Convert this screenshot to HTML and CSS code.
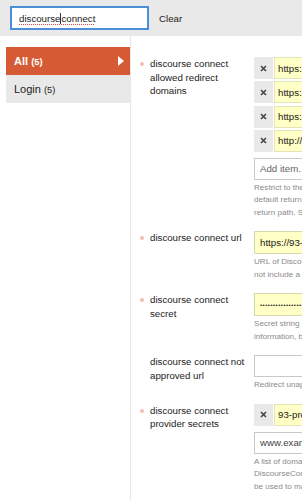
FILE: index.html
```html
<!DOCTYPE html>
<html>
<head>
<meta charset="utf-8">
<link rel="stylesheet" href="styles.css">
</head>
<body>
<div class="topbar">
  <div class="search"><span class="sq">discourse</span><span class="caret"></span><span class="sq">connect</span></div>
  <span class="clear">Clear</span>
</div>
<div class="main">
  <nav class="side">
    <div class="nav-item active"><span>All <span class="count">(5)</span></span><svg class="tri" width="6" height="10" viewBox="0 0 6 10"><polygon points="0,0 6,5 0,10" fill="#fff"/></svg></div>
    <div class="nav-item"><span>Login <span class="count">(5)</span></span></div>
  </nav>
  <div class="settings">
    <div class="row">
      <div class="label"><span class="dot"></span><span class="ltext">discourse connect allowed redirect domains</span></div>
      <div class="ctrl">
        <div class="list">
          <div class="chip"><span class="x"><svg width="7" height="7" viewBox="0 0 7 7"><path d="M1 1L6 6M6 1L1 6" stroke="#444" stroke-width="1.6"/></svg></span><span class="val">https://93-pretty-forum.example.com</span></div>
          <div class="chip"><span class="x"><svg width="7" height="7" viewBox="0 0 7 7"><path d="M1 1L6 6M6 1L1 6" stroke="#444" stroke-width="1.6"/></svg></span><span class="val">https://app.example.com</span></div>
          <div class="chip"><span class="x"><svg width="7" height="7" viewBox="0 0 7 7"><path d="M1 1L6 6M6 1L1 6" stroke="#444" stroke-width="1.6"/></svg></span><span class="val">https://www.example.com</span></div>
          <div class="chip"><span class="x"><svg width="7" height="7" viewBox="0 0 7 7"><path d="M1 1L6 6M6 1L1 6" stroke="#444" stroke-width="1.6"/></svg></span><span class="val">http://localhost:3000</span></div>
        </div>
        <div class="input plain"><span class="ph">Add item...</span></div>
        <div class="desc">
          <div>Restrict to the following domains for return_paths provided by DiscourseConnect (by</div>
          <div>default return path must be on current site). Use * to allow any domain for</div>
          <div>return path. Subdomain wildcards (*.foobar.com) are not allowed.</div>
        </div>
      </div>
    </div>
    <div class="row">
      <div class="label"><span class="dot"></span><span class="ltext">discourse connect url</span></div>
      <div class="ctrl">
        <div class="input yellow">https://93-pretty-forum.example.com/session/sso_provider</div>
        <div class="desc">
          <div>URL of DiscourseConnect endpoint (must include http:// or https://, and must</div>
          <div>not include a trailing slash)</div>
        </div>
      </div>
    </div>
    <div class="row">
      <div class="label"><span class="dot"></span><span class="ltext">discourse connect secret</span></div>
      <div class="ctrl">
        <div class="input yellow pw">••••••••••••••••••••••••••••••</div>
        <div class="desc">
          <div>Secret string used to cryptographically authenticate DiscourseConnect</div>
          <div>information, be sure it is 10 characters or longer</div>
        </div>
      </div>
    </div>
    <div class="row">
      <div class="label"><span class="nodot"></span><span class="ltext">discourse connect not approved url</span></div>
      <div class="ctrl">
        <div class="input plain"></div>
        <div class="desc">
          <div>Redirect unapproved DiscourseConnect accounts to this URL</div>
        </div>
      </div>
    </div>
    <div class="row">
      <div class="label"><span class="dot"></span><span class="ltext">discourse connect provider secrets</span></div>
      <div class="ctrl">
        <div class="list">
          <div class="chip"><span class="x"><svg width="7" height="7" viewBox="0 0 7 7"><path d="M1 1L6 6M6 1L1 6" stroke="#444" stroke-width="1.6"/></svg></span><span class="val">93-pretty-forum.example.com|secret</span></div>
        </div>
        <div class="input plain"><span class="dark">www.example.com|sso_secret</span></div>
        <div class="desc">
          <div>A list of domain-secret pairs that are using DiscourseConnect provider. Make sure</div>
          <div>DiscourseConnect secret is 10 characters or longer. Wildcard symbol * can</div>
          <div>be used to match any domain or only a part of it (e.g. *.example.com).</div>
        </div>
      </div>
    </div>
  </div>
</div>
</body>
</html>
```

FILE: styles.css
```css
* { box-sizing: border-box; }
html, body { margin: 0; padding: 0; overflow: hidden; background: #fff; }
body {
  font-family: "Liberation Sans", Arial, sans-serif;
  color: #222;
  width: 302px;
  height: 500px;
}
.topbar {
  height: 36px;
  background: #e9e9e9;
  display: flex;
  align-items: center;
  padding-left: 10px;
  width: 302px;
}
.search {
  width: 139px;
  height: 24px;
  border: 2px solid #4a8fd8;
  background: #fff;
  display: flex;
  align-items: center;
  padding-left: 7px;
  font-size: 9.7px;
  color: #222;
  flex-shrink: 0;
}
.sq {
  text-decoration: underline dotted #e0463a 1px;
  text-underline-offset: 2px;
}
.caret { width: 1px; height: 11px; background: #333; }
.clear { margin-left: 10px; font-size: 9.7px; color: #222; }
.main { display: flex; min-height: 464px; }
.side {
  width: 131px;
  padding: 11px 0 0 6px;
  border-right: 1px solid #e6e6e6;
  flex-shrink: 0;
}
.nav-item {
  height: 28px;
  display: flex;
  align-items: center;
  padding-left: 8px;
  font-size: 11px;
  background: #e9e9e9;
  color: #222;
}
.nav-item.active {
  background: #d65a33;
  color: #fff;
  font-weight: bold;
  justify-content: space-between;
  padding-right: 6px;
}
.count { font-size: 0.85em; }
.settings { padding: 21px 0 0 9px; overflow: hidden; width: 171px; }
.row { display: flex; gap: 4px; margin-bottom: 12px; }
.label {
  width: 110px;
  display: flex;
  align-items: flex-start;
  font-size: 9.7px;
  line-height: 13.5px;
  flex-shrink: 0;
  color: #222;
}
.dot {
  width: 4px; height: 4px; border-radius: 50%;
  background: #f2bdb5; margin: 5px 6px 0 0; flex-shrink: 0;
}
.nodot { width: 10px; flex-shrink: 0; }
.ctrl { width: 220px; flex-shrink: 0; }
.list { display: flex; flex-direction: column; gap: 2.3px; margin-bottom: 6px; }
.chip { display: flex; height: 22px; gap: 1px; }
.x {
  width: 19px; flex-shrink: 0; background: #e9e9e9;
  display: flex; align-items: center; justify-content: center;
}
.val {
  flex: 1; background: #ffffc6; border: 1px solid #e4e4b8;
  display: flex; align-items: center; padding-left: 3px;
  font-size: 9.7px; white-space: nowrap; overflow: hidden; color: #222;
}
.input {
  height: 22px; border: 1px solid #c8c8c8; display: flex; align-items: center;
  padding-left: 5px; font-size: 9.7px; white-space: nowrap; overflow: hidden; color: #222;
}
.input.yellow { background: #ffffc6; border-color: #d8d8b0; height: 23px; }
.input.pw { font-size: 6px; letter-spacing: 0.5px; }
.ph { color: #666; }
.dark { color: #444; }
.desc {
  margin-top: 2px; font-size: 8.1px; line-height: 12.5px; color: #8a8a8a; white-space: nowrap;
}
```
